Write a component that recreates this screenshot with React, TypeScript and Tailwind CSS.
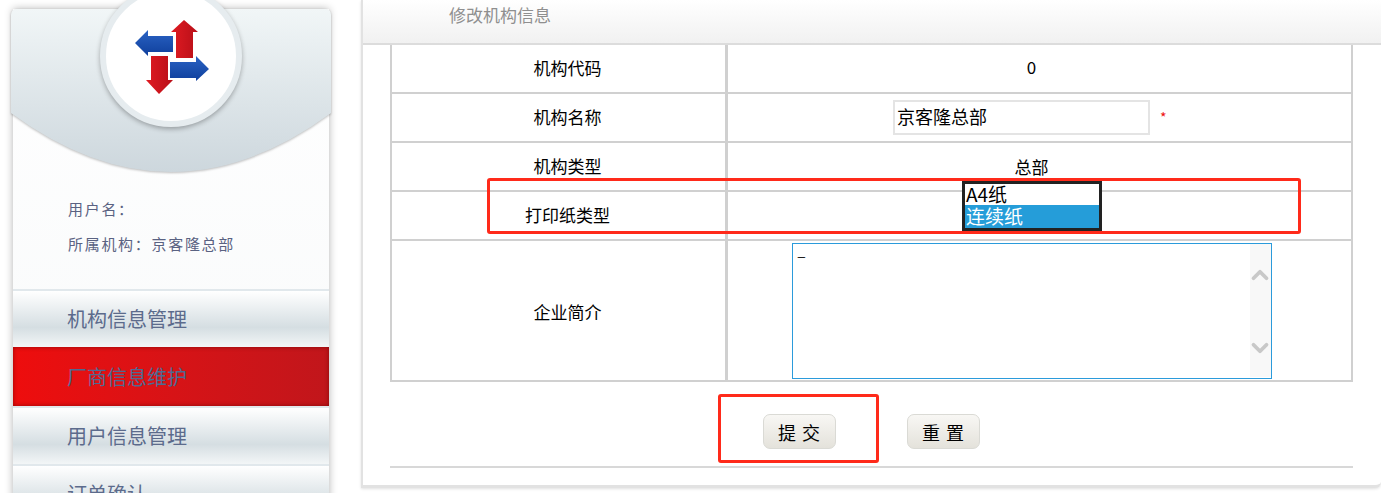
import { ChevronUp, ChevronDown } from "lucide-react";

const fontStack = "font-['Noto_Sans_CJK_SC','Noto_Sans',sans-serif]";

function ArrowsLogo() {
  return (
    <svg width="80" height="80" viewBox="130 18 80 80">
      <defs>
        <linearGradient id="red" x1="0" y1="0" x2="1" y2="0">
          <stop offset="0" stopColor="#e01b22" />
          <stop offset="1" stopColor="#b80f18" />
        </linearGradient>
        <linearGradient id="blue" x1="0" y1="0" x2="0" y2="1">
          <stop offset="0" stopColor="#2a63c4" />
          <stop offset="1" stopColor="#0f3f9c" />
        </linearGradient>
      </defs>
      <path d="M134 43 L147 30 V36 H172 V52 H147 V56 Z" fill="url(#blue)" />
      <path d="M183 20 L197 32 H192 V58 H175 V32 H170 Z" fill="url(#red)" />
      <path d="M150 56 H167 V80 H172 L158 94 L145 80 H150 Z" fill="url(#red)" />
      <path d="M169 62 H195 V56 L208 69 L195 81 V78 H169 Z" fill="url(#blue)" />
    </svg>
  );
}

function MenuItem({ label, active }: { label: string; active?: boolean }) {
  if (active) {
    return (
      <div className="h-[59px] flex items-center pl-[54px] text-[20px] text-[#4f6a92] bg-gradient-to-r from-[#ee0d0d] to-[#c1161b] shadow-[inset_0_0_4px_rgba(90,0,0,0.6)]">
        {label}
      </div>
    );
  }
  return (
    <div className="h-[58px] flex items-center pl-[54px] text-[20px] text-[#5c6b8c] bg-gradient-to-b from-[#ffffff] via-[#d5dee2] via-65% to-[#f3f6f7] border-t-2 border-[#e1e8ec]">
      {label}
    </div>
  );
}

function Row({
  label,
  height,
  children,
  labelClass,
}: {
  label: string;
  height: string;
  children?: React.ReactNode;
  labelClass?: string;
}) {
  return (
    <div className={`flex border-b-2 border-[#d0d0d0] ${height}`}>
      <div className={`w-[336px] shrink-0 flex items-center justify-center pl-[18px] border-r-[3px] border-[#d0d0d0] ${labelClass ?? "pb-[2px]"}`}>
        {label}
      </div>
      <div className="flex-1 flex items-center justify-center pr-[16px] relative">
        {children}
      </div>
    </div>
  );
}

export default function App() {
  return (
    <div className={`relative w-[1381px] h-[493px] overflow-hidden bg-white flex text-[16px] text-black ${fontStack}`}>
      {/* sidebar */}
      <div className="ml-[13px] w-[316px] shrink-0 h-[560px] bg-gradient-to-b from-[#ffffff] to-[#f6f8f9] shadow-[0_0_8px_rgba(0,0,0,0.3)] mt-[9px] relative">
        <div className="-mx-[2px] drop-shadow-[0_1px_1px_rgba(0,0,0,0.25)]">
          <div className="h-[163px] bg-gradient-to-b from-[#f1f6f7] to-[#cdd7dd] [clip-path:path('M0_6Q0_0_6_0H314Q320_0_320_6V104Q160_222_0_104Z')]" />
        </div>
        <div className="absolute left-[87px] -top-[24px] w-[142px] h-[142px] rounded-full bg-white border-[6px] border-[#e6ecef] shadow-[0_2px_5px_rgba(0,0,0,0.3)] flex items-center justify-center pt-[3px]">
          <ArrowsLogo />
        </div>
        <div className="h-[117px] pl-[55px] pt-[19px] text-[15px] leading-[35px] tracking-[1.7px] text-[#5a6282]">
          <div>用户名：</div>
          <div>所属机构：京客隆总部</div>
        </div>
        <MenuItem label="机构信息管理" />
        <MenuItem label="厂商信息维护" active />
        <MenuItem label="用户信息管理" />
        <MenuItem label="订单确认" />
      </div>

      {/* main panel */}
      <div className="ml-[32px] flex-1 h-[488px] bg-white border-l-2 border-b-[3px] border-[#e2e2e2] rounded-br-[6px] shadow-[0_1px_3px_rgba(0,0,0,0.12)]">
        <div className="h-[45px] pl-[86px] pb-[13px] flex items-center text-[17px] text-[#8f8f8f] bg-gradient-to-b from-[#ffffff] to-[#f1f1f1] border-b-2 border-[#dcdcdc]">
          修改机构信息
        </div>
        <div className="ml-[27px] w-[963px] text-[17px]">
          <div className="border-l-2 border-r-2 border-[#d0d0d0]">
            <Row label="机构代码" height="h-[49px]">
              <span className="pb-[3px]">0</span>
            </Row>
            <Row label="机构名称" height="h-[49px]">
              <div className="flex items-center ml-[2px]">
                <input
                  readOnly
                  defaultValue="京客隆总部"
                  className="w-[257px] h-[35px] px-[2px] pb-[3px] text-[18px] border-2 border-[#e4e4e4] outline-none"
                />
                <span className="w-[22px] pl-[10px] text-[14px] text-[#ee1111]">*</span>
              </div>
            </Row>
            <Row label="机构类型" height="h-[49px]">
              <span>总部</span>
            </Row>
            <Row label="打印纸类型" height="h-[49px]">
              <div className="absolute left-[234px] -top-[11px] w-[140px] h-[50px] border-[3px] border-[#222222] bg-white text-[19px]">
                <div className="h-[21px] pl-[1px] leading-[19px]">A4纸</div>
                <div className="h-[23px] pl-[1px] leading-[21px] bg-[#259dd9] text-white">连续纸</div>
              </div>
            </Row>
            <Row label="企业简介" height="h-[141px]" labelClass="pt-[2px]">
              <div className="w-[480px] h-[136px] flex border border-[#2b9bdb] pb-[1px]">
                <div className="flex-1 pl-[5px] text-[14px] leading-[12px]">_</div>
                <div className="w-[21px] bg-[#f8f8f8] flex flex-col items-center justify-between pt-[18px] pb-[16px] text-[#c8c8c8]">
                  <ChevronUp size={26} strokeWidth={3.5} className="shrink-0" />
                  <ChevronDown size={26} strokeWidth={3.5} className="shrink-0" />
                </div>
              </div>
            </Row>
          </div>
          <div className="h-[86px] border-b-2 border-[#d8d8d8] flex items-center pl-[373px] gap-[71px] pt-[15px]">
            <button className="w-[73px] h-[35px] rounded-[7px] border border-[#dadad5] bg-gradient-to-b from-[#f8f7f4] to-[#e4e2db] text-[18px] leading-[20px] tracking-[1px]">
              提 交
            </button>
            <button className="w-[73px] h-[35px] rounded-[7px] border border-[#dadad5] bg-gradient-to-b from-[#f8f7f4] to-[#e4e2db] text-[18px] leading-[20px] tracking-[1px]">
              重 置
            </button>
          </div>
        </div>
      </div>

      {/* red annotations */}
      <div className="absolute left-[487px] top-[178px] w-[814px] h-[56px] border-[3px] border-[#ff2a1a] rounded-[3px]" />
      <div className="absolute left-[718px] top-[394px] w-[161px] h-[69px] border-[3px] border-[#ff2a1a] rounded-[3px]" />
    </div>
  );
}
